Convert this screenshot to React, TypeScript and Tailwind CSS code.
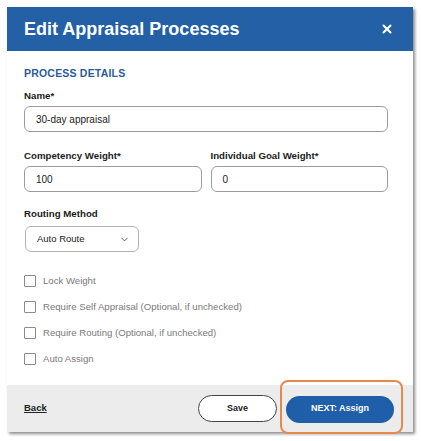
import { ChevronDown, X } from "lucide-react";

const checks = [
  "Lock Weight",
  "Require Self Appraisal (Optional, if unchecked)",
  "Require Routing (Optional, if unchecked)",
  "Auto Assign",
];

const Label = ({ children }: { children: React.ReactNode }) => (
  <p className="text-[9.7px] font-bold leading-[14px] text-[#1a1a1a]">{children}</p>
);

const Field = ({ value }: { value: string }) => (
  <div className="mt-[3px] h-[26px] rounded-[6px] border border-[#9c9c9c] px-[11px] flex items-center text-[10px] text-[#222]">
    {value}
  </div>
);

export default function App() {
  return (
    <div className="min-h-[441px] w-[421px] bg-white pl-[7px] pt-[7px]" style={{ fontFamily: '"Liberation Sans", Arial, sans-serif' }}>
      <div className="relative w-[406px] bg-white shadow-[2px_2px_3px_rgba(0,0,0,0.45)]">
        <div className="h-[44px] bg-[#2360a6] pl-[17px] pr-[19px] flex items-center justify-between">
          <h1 className="text-[18px] font-bold text-white">Edit Appraisal Processes</h1>
          <X className="w-[14px] h-[14px] text-white" strokeWidth={3.5} />
        </div>

        <div className="pl-[17px] pr-[25px] pt-[15px] pb-[13px]">
          <p className="text-[10.5px] font-bold leading-[14px] tracking-[0.2px] text-[#2b5c98]">PROCESS DETAILS</p>

          <div className="mt-[9px]">
            <Label>Name*</Label>
            <Field value="30-day appraisal" />
          </div>

          <div className="mt-[17px] grid grid-cols-2 gap-[9px]">
            <div>
              <Label>Competency Weight*</Label>
              <Field value="100" />
            </div>
            <div>
              <Label>Individual Goal Weight*</Label>
              <Field value="0" />
            </div>
          </div>

          <div className="mt-[15px]">
            <Label>Routing Method</Label>
            <div className="mt-[5px] ml-px w-[114px] h-[26px] rounded-[6px] border border-[#b4b4b4] pl-[11px] pr-[8px] flex items-center justify-between text-[9.5px] text-[#222]">
              Auto Route
              <ChevronDown className="w-[11px] h-[11px] text-[#333]" strokeWidth={1.75} />
            </div>
          </div>

          <div className="mt-[16px]">
            {checks.map((c) => (
              <div key={c} className="h-[26px] flex items-center gap-[7px]">
                <span className="w-[12px] h-[12px] border border-[#8a8a8a] rounded-[1px] bg-white" />
                <span className="text-[9.6px] text-[#7a7a7a]">{c}</span>
              </div>
            ))}
          </div>
        </div>

        <div className="h-[47px] bg-[#ececec] pl-[17px] pr-[19px] flex items-center">
          <a className="text-[9.5px] font-bold underline text-[#222]">Back</a>
          <div className="ml-auto flex items-center gap-[9px]">
            <button className="w-[79px] h-[27px] rounded-full border border-[#444] bg-white text-[9px] font-bold text-[#222]">Save</button>
            <div className="relative">
              <button className="w-[108px] h-[27px] rounded-full bg-[#1f5ea8] text-[9px] font-bold text-white">NEXT: Assign</button>
              <div className="absolute -left-[6px] -right-[9px] -top-[14px] -bottom-[11px] rounded-[8px] border-2 border-[#e58a4c] pointer-events-none" />
            </div>
          </div>
        </div>
      </div>
    </div>
  );
}
